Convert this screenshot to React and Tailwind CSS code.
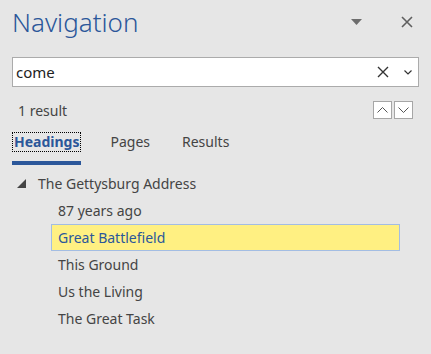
import { useState } from "react";

const headings = [
  "87 years ago",
  "Great Battlefield",
  "This Ground",
  "Us the Living",
  "The Great Task",
];

const font = { fontFamily: '"Segoe UI", "Noto Sans", sans-serif' };

const App = () => {
  const [query] = useState("come");
  const selected = "Great Battlefield";

  return (
    <div
      className="w-[431px] h-[354px] bg-[#e6e6e6] text-[#444444] overflow-hidden"
      style={font}
    >
      {/* Title bar */}
      <div className="flex items-center justify-between pl-[12px] pr-[18px] pt-[4px] h-[40px]">
        <h1 className="text-[26px] font-light text-[#2b579a] leading-none">Navigation</h1>
        <div className="flex items-center gap-[39px]">
          <svg width="11" height="6" viewBox="0 0 11 6">
            <path d="M0 0 L11 0 L5.5 6 Z" fill="#6d6d6d" />
          </svg>
          <svg width="12" height="12" viewBox="0 0 12 12">
            <path d="M1 1 L11 11 M11 1 L1 11" stroke="#5f5f5f" strokeWidth="1.6" />
          </svg>
        </div>
      </div>

      {/* Search box */}
      <div className="mx-[12px] mt-[17px] h-[30px] border border-[#ababab] bg-white flex items-center pl-[3px] pr-[6px]">
        <span className="flex-1 text-[15px] text-[#222222]">{query}</span>
        <svg width="12" height="12" viewBox="0 0 12 12" className="mr-[15px]">
          <path d="M1 1 L11 11 M11 1 L1 11" stroke="#333333" strokeWidth="1.4" />
        </svg>
        <svg width="8" height="5" viewBox="0 0 8 5">
          <path d="M0.5 0.5 L4 4 L7.5 0.5" fill="none" stroke="#333333" strokeWidth="1.2" />
        </svg>
      </div>

      {/* Result count */}
      <div className="flex items-center justify-between pl-[18px] pr-[18px] mt-[14px] h-[18px]">
        <span className="text-[14px]">1 result</span>
        <div className="flex gap-[2px]">
          <button className="w-[19px] h-[18px] border border-[#a6a6a6] bg-white flex items-center justify-center">
            <svg width="11" height="6" viewBox="0 0 11 6">
              <path d="M0.5 5.5 L5.5 0.5 L10.5 5.5" fill="none" stroke="#555555" strokeWidth="1" />
            </svg>
          </button>
          <button className="w-[19px] h-[18px] border border-[#a6a6a6] bg-white flex items-center justify-center">
            <svg width="11" height="6" viewBox="0 0 11 6">
              <path d="M0.5 0.5 L5.5 5.5 L10.5 0.5" fill="none" stroke="#555555" strokeWidth="1" />
            </svg>
          </button>
        </div>
      </div>

      {/* Tabs */}
      <div className="flex items-start pl-[12px] mt-[13px] text-[14px]">
        <div className="flex flex-col">
          <span className="px-[1px] h-[20px] leading-[18px] border border-dotted border-black font-bold text-[#2b579a]">
            Headings
          </span>
          <div className="h-[4px] bg-[#2b579a] mt-[9px]" />
        </div>
        <span className="ml-[29px] h-[20px] leading-[20px]">Pages</span>
        <span className="ml-[32px] h-[20px] leading-[20px]">Results</span>
      </div>

      {/* Heading tree */}
      <div className="mt-[5px] text-[14px] pr-[31px]">
        <div className="flex items-center h-[27px] pl-[17px]">
          <svg width="9" height="9" viewBox="0 0 9 9" className="mr-[12px]">
            <path d="M9 0 L9 9 L0 9 Z" fill="#444444" />
          </svg>
          <span>The Gettysburg Address</span>
        </div>
        {headings.map((h) => (
          <div
            key={h}
            className={`flex items-center h-[27px] ml-[51px] pl-[6px] border ${
              h === selected
                ? "bg-[#fff082] border-[#a3bde3] text-[#2b579a]"
                : "border-transparent"
            }`}
          >
            {h}
          </div>
        ))}
      </div>
    </div>
  );
};

export default App;
